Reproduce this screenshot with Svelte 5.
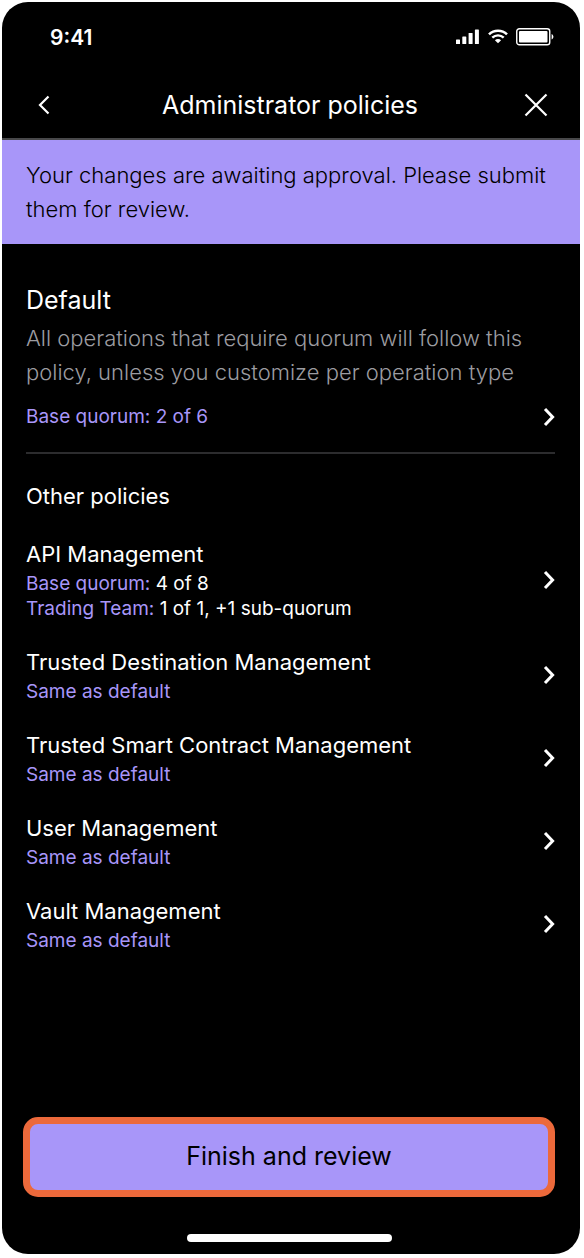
<script>
  const policies = [
    {
      name: 'API Management',
      rules: [
        { label: 'Base quorum:', value: '4 of 8' },
        { label: 'Trading Team:', value: '1 of 1, +1 sub-quorum' }
      ]
    },
    { name: 'Trusted Destination Management', rules: [{ label: 'Same as default' }] },
    { name: 'Trusted Smart Contract Management', rules: [{ label: 'Same as default' }] },
    { name: 'User Management', rules: [{ label: 'Same as default' }] },
    { name: 'Vault Management', rules: [{ label: 'Same as default' }] }
  ];
</script>

{#snippet chevron()}
  <svg width="12" height="20" viewBox="0 0 12 20" aria-hidden="true">
    <path d="M2 2 L9.6 10 L2 18" fill="none" stroke="#fff" stroke-width="3" />
  </svg>
{/snippet}

<div class="page">
  <div class="phone">
    <div class="status">
      <span class="time">9:41</span>
      <div class="indicators">
        <svg width="24" height="16" viewBox="0 0 24 16" fill="#fff" aria-hidden="true">
          <rect x="0" y="10.5" width="4" height="4.5" rx="0.6" />
          <rect x="6.3" y="7.5" width="4" height="7.5" rx="0.6" />
          <rect x="12.6" y="4" width="4" height="11" rx="0.6" />
          <rect x="18.9" y="0.5" width="4" height="14.5" rx="0.6" />
        </svg>
        <svg width="20" height="16" viewBox="0 0 20 16" fill="none" stroke="#fff" aria-hidden="true">
          <path d="M1 5.4 C6 0.5 14 0.5 19 5.4" stroke-width="2.6" />
          <path d="M4.3 8.7 C7.5 5.6 12.5 5.6 15.7 8.7" stroke-width="2.4" />
          <path d="M10 14.3 L6.9 11.3 C8.7 9.7 11.3 9.7 13.1 11.3 Z" fill="#fff" stroke="none" />
        </svg>
        <svg width="38" height="18" viewBox="0 0 38 18" aria-hidden="true">
          <rect x="0.75" y="0.75" width="33" height="16" rx="2.6" fill="none" stroke="#fff" stroke-width="1.4" />
          <rect x="3" y="3" width="28.5" height="11.5" rx="1" fill="#fff" />
          <path d="M35.6 6 C38 7 38 10.5 35.6 11.5 Z" fill="#fff" />
        </svg>
      </div>
    </div>

    <header>
      <button class="icon" aria-label="Back">
        <svg width="12" height="20" viewBox="0 0 12 20" aria-hidden="true">
          <path d="M10.5 1.5 L2 10 L10.5 18.5" fill="none" stroke="#fff" stroke-width="2.2" />
        </svg>
      </button>
      <h1>Administrator policies</h1>
      <button class="icon" aria-label="Close">
        <svg width="24" height="24" viewBox="0 0 24 24" aria-hidden="true">
          <path d="M1.5 1.5 L22.5 22.5 M22.5 1.5 L1.5 22.5" fill="none" stroke="#fff" stroke-width="2.2" />
        </svg>
      </button>
    </header>

    <p class="banner">Your changes are awaiting approval. Please submit them for review.</p>

    <main>
      <section class="default">
        <h2>Default</h2>
        <p>All operations that require quorum will follow this policy, unless you customize per operation type</p>
        <button class="row">
          <span class="rule accent">Base quorum: 2 of 6</span>
          {@render chevron()}
        </button>
      </section>

      <section>
        <h3>Other policies</h3>
        <ul>
          {#each policies as policy}
            <li>
              <button class="row">
                <span class="text">
                  <span class="name">{policy.name}</span>
                  {#each policy.rules as rule}
                    <span class="rule"><span class="accent">{rule.label}</span>{#if rule.value}{' '}{rule.value}{/if}</span>
                  {/each}
                </span>
                {@render chevron()}
              </button>
            </li>
          {/each}
        </ul>
      </section>
    </main>

    <footer>
      <button class="finish">Finish and review</button>
      <div class="home"></div>
    </footer>
  </div>
</div>

<style>
  :global(body) {
    background: #fff;
  }

  .page {
    box-sizing: border-box;
    min-height: 100vh;
    padding: 2px 4px 4px 2px;
    display: flex;
  }

  .phone {
    flex: 1;
    display: flex;
    flex-direction: column;
    overflow: hidden;
    border-radius: 26px;
    background: #000;
    color: #fff;
    font-family: Inter, 'Liberation Sans', sans-serif;
    font-size: 22px;
  }

  h1,
  h2,
  h3,
  p,
  ul {
    margin: 0;
    padding: 0;
    font-weight: 400;
  }

  button {
    margin: 0;
    padding: 0;
    border: 0;
    background: none;
    color: inherit;
    font: inherit;
    cursor: pointer;
  }

  svg {
    display: block;
    flex: none;
  }

  .status {
    display: flex;
    align-items: center;
    justify-content: space-between;
    height: 70px;
    padding: 0 26px 0 48px;
  }

  .time {
    font-size: 21px;
    font-weight: 600;
  }

  .indicators {
    display: flex;
    align-items: center;
    gap: 8px;
  }

  header {
    display: flex;
    align-items: center;
    justify-content: space-between;
    height: 66px;
    padding: 0 26px 0 24px;
    border-bottom: 2px solid #48484a;
  }

  h1 {
    font-size: 25px;
    line-height: 32px;
  }

  .icon {
    display: flex;
    align-items: center;
    justify-content: center;
    width: 36px;
    height: 36px;
  }

  .banner {
    padding: 18px 24px;
    background: #a896f9;
    color: #000;
    line-height: 34px;
    font-weight: 300;
  }

  main {
    flex: 1;
    padding: 40px 25px 0 24px;
  }

  .default {
    padding-bottom: 23px;
    border-bottom: 2px solid #2c2c2e;
  }

  h2 {
    font-size: 25px;
    line-height: 32px;
  }

  .default p {
    margin: 5px 0 15px;
    color: #9c9ca1;
    line-height: 34px;
    font-weight: 300;
  }

  .row {
    display: flex;
    align-items: center;
    justify-content: space-between;
    width: 100%;
    text-align: left;
  }

  .text {
    display: flex;
    flex-direction: column;
  }

  .name {
    padding-bottom: 1px;
    font-size: 22px;
    line-height: 32px;
  }

  .rule {
    font-size: 19px;
    line-height: 25px;
  }

  .accent {
    color: #a896f9;
  }

  h3 {
    margin: 26px 0;
    font-size: 22px;
    line-height: 32px;
  }

  ul {
    display: flex;
    flex-direction: column;
    gap: 25px;
    list-style: none;
  }

  footer {
    display: flex;
    flex-direction: column;
    align-items: center;
    gap: 37px;
    padding: 0 25px 12px 21px;
  }

  .finish {
    box-sizing: border-box;
    width: 100%;
    height: 80px;
    padding-bottom: 2px;
    border: 7px solid #ec693b;
    border-radius: 15px;
    background: #a896f9;
    color: #000;
    font-size: 25px;
  }

  .home {
    width: 205px;
    height: 8px;
    border-radius: 4px;
    background: #fff;
  }
</style>
